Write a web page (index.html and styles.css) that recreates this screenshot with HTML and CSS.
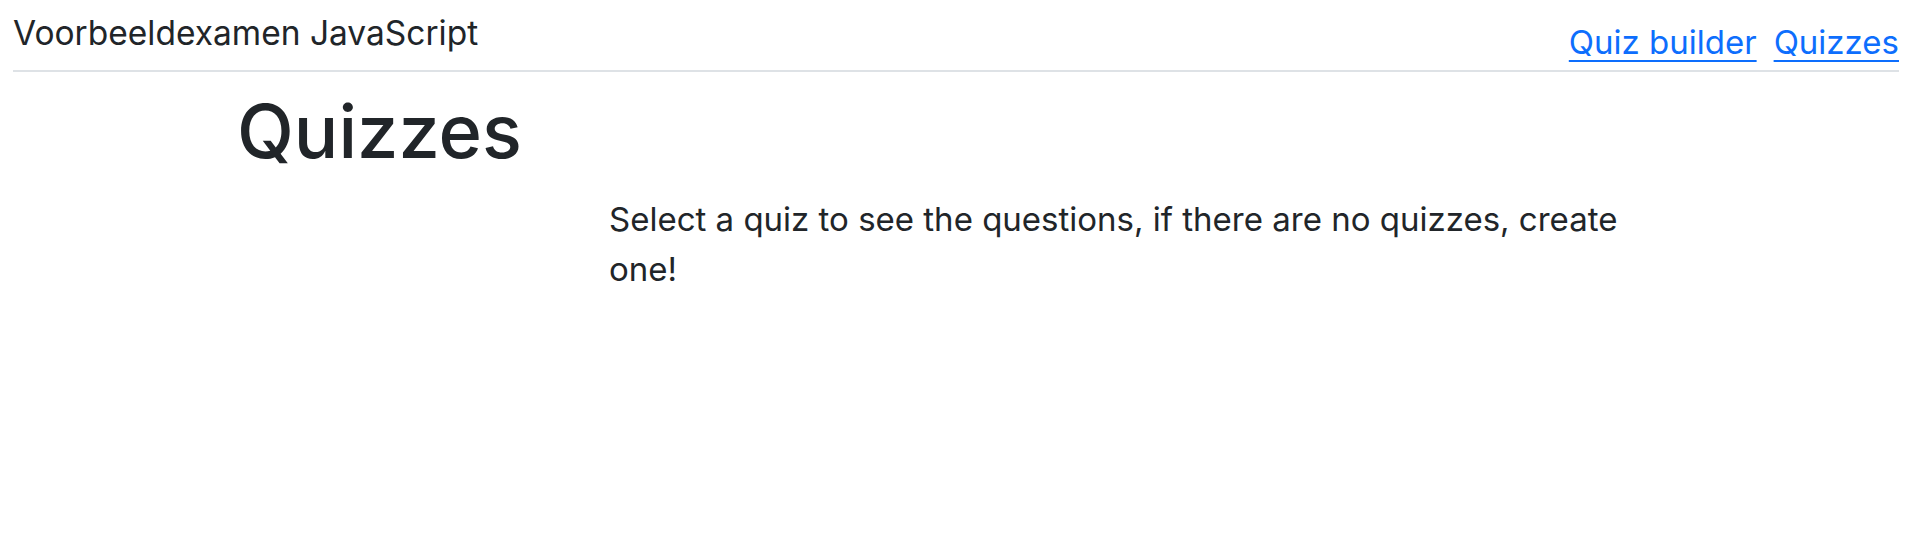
FILE: index.html
```html
<!DOCTYPE html>
<html lang="nl">
<head>
<meta charset="utf-8">
<title>Quizzes</title>
<link rel="stylesheet" href="styles.css">
</head>
<body>
<header class="site-header">
  <div class="brand">Voorbeeldexamen JavaScript</div>
  <nav class="nav">
    <a href="#" class="nav-link">Quiz builder</a>
    <a href="#" class="nav-link">Quizzes</a>
  </nav>
</header>
<main class="page">
  <h1 class="page-title">Quizzes</h1>
  <p class="intro">Select a quiz to see the questions, if there are no quizzes, create one!</p>
</main>
</body>
</html>
```
FILE: styles.css
```css
html, body {
  margin: 0;
  padding: 0;
  background: #fff;
}
body {
  font-family: Inter, "Noto Sans", sans-serif;
  color: #212529;
}
.site-header {
  display: flex;
  justify-content: space-between;
  align-items: flex-end;
  margin: 0 10px 0 13px;
  height: 72px;
  border-bottom: 2px solid #dee2e6;
  box-sizing: border-box;
}
.brand {
  align-self: flex-start;
  font-size: 33.5px;
  line-height: 1;
  padding-top: 17px;
  font-weight: 400;
}
.nav {
  display: flex;
  gap: 17px;
  padding-bottom: 11px;
}
.nav-link {
  color: #0d6efd;
  font-size: 33px;
  line-height: 1;
  text-decoration: underline;
  text-underline-offset: 6px;
  text-decoration-thickness: 2px;
}
.page {
  padding-left: 237px;
}
.page-title {
  margin: 0;
  font-size: 74px;
  font-weight: 500;
  line-height: 1.2;
  padding-top: 15px;
}
.intro {
  margin: 18px 0 0 372px;
  max-width: 1040px;
  font-size: 33px;
  line-height: 50px;
}
```
